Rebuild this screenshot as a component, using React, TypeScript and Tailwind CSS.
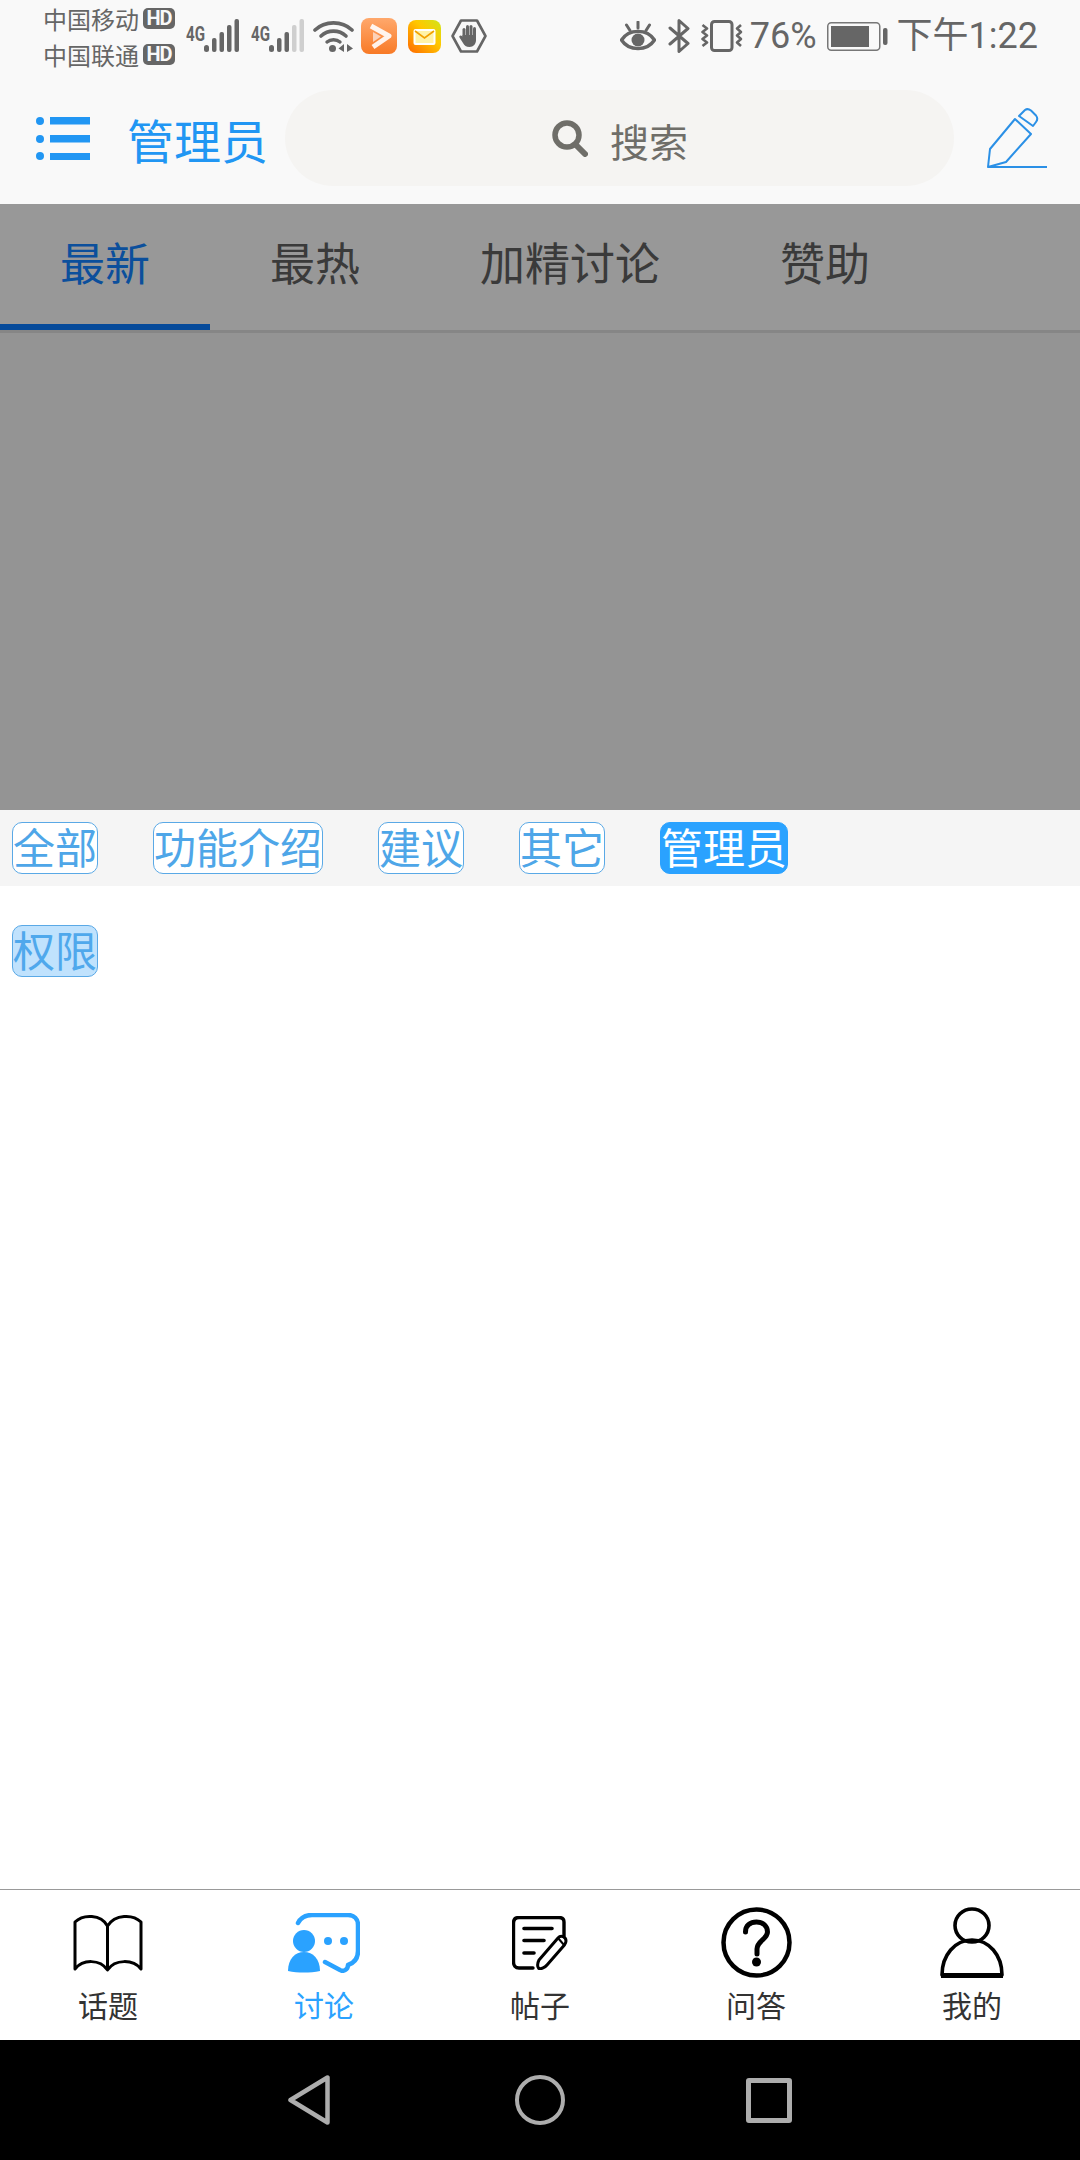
import React from 'react';

const cjk = { fontFamily: '"Noto Sans CJK SC", "Noto Sans", sans-serif' };

function HdBadge() {
  return (
    <span className="ml-[4px] flex h-[21px] w-[32px] items-center justify-center rounded-[5px] bg-[#666666] font-['Roboto',sans-serif] text-[20px] leading-none font-bold tracking-[-1px] text-[#f9f9f9]">
      HD
    </span>
  );
}

function Signal({ level }: { level: number }) {
  const bars = [
    { x: 8, y: 19 },
    { x: 15.500, y: 13 },
    { x: 23, y: 6 },
    { x: 30.500, y: 0 },
  ];
  return (
    <div className="flex h-[34px] items-start">
      <span className="inline-block w-[18px] origin-left scale-x-[0.72] font-['Roboto',sans-serif] text-[21px] leading-[30px] font-bold text-[#666666]">4G</span>
      <svg width="35" height="34" viewBox="0 0 35 34">
        <rect x="0" y="26" width="5" height="7" rx="2.500" fill="#666" />
        {bars.map((b, i) => (
          <rect key={i} x={b.x} y={b.y} width="4.500" height={33 - b.y} rx="2" fill={i < level ? '#666' : '#cfcfcf'} />
        ))}
      </svg>
    </div>
  );
}

function Wifi() {
  return (
    <svg width="41" height="34" viewBox="0 0 41 34" fill="none" stroke="#666">
      <path d="M2 11C12 1.500 29 1.500 39 11" strokeWidth="3.600" strokeLinecap="round" />
      <path d="M8 17C15 10.500 26 10.500 33 17" strokeWidth="3.600" strokeLinecap="round" />
      <path d="M14 23C17.500 20 23.500 20 27 23" strokeWidth="3.400" strokeLinecap="round" />
      <circle cx="19.500" cy="29.500" r="3.500" fill="#666" stroke="none" />
      <path d="M31 25V33L25.500 29.500ZM34 25V33L40 29.500Z" fill="#666" stroke="none" />
    </svg>
  );
}

function VideoApp() {
  return (
    <svg width="36" height="36" viewBox="0 0 36 36">
      <defs>
        <linearGradient id="video" x1="0" y1="0" x2="0" y2="1">
          <stop offset="0" stopColor="#ffa86c" />
          <stop offset="1" stopColor="#f87a26" />
        </linearGradient>
      </defs>
      <rect width="36" height="36" rx="8" fill="url(#video)" />
      <path d="M10 8L28 18L12 29" fill="none" stroke="#fff" strokeWidth="5" strokeLinejoin="round" opacity="0.9" />
      <path d="M12 14L20 18.500L12 24Z" fill="#fcd2b8" />
    </svg>
  );
}

function MailApp() {
  return (
    <svg width="33" height="33" viewBox="0 0 33 33">
      <defs>
        <linearGradient id="mail" x1="1" y1="0" x2="0" y2="1">
          <stop offset="0" stopColor="#cfe61a" />
          <stop offset="0.4" stopColor="#ffc800" />
          <stop offset="1" stopColor="#ff6a00" />
        </linearGradient>
      </defs>
      <rect width="33" height="33" rx="8" fill="url(#mail)" />
      <rect x="6.500" y="10" width="20" height="14" rx="1" fill="#fff3a8" stroke="#fff" strokeWidth="2" />
      <path d="M7 11L16.500 18L26 11" fill="none" stroke="#f2a100" strokeWidth="1.600" />
    </svg>
  );
}

function HandHex() {
  return (
    <svg width="36" height="34" viewBox="0 0 36 34">
      <path d="M1.500 17L10 1.500H26L34.500 17L26 32.500H10Z" fill="none" stroke="#666" strokeWidth="2.600" strokeLinejoin="round" />
      <g fill="#666">
        <rect x="11.500" y="9" width="3" height="13" rx="1.500" />
        <rect x="15" y="6" width="3" height="14" rx="1.500" />
        <rect x="18.500" y="6" width="3" height="14" rx="1.500" />
        <rect x="22" y="8" width="3" height="14" rx="1.500" />
        <path d="M11.500 16H25V21C25 25 22.500 28 18.500 28C15 28 13.500 26.500 12 24L8.500 18.500C7.500 17 9.500 15.500 11 17L11.500 18Z" />
      </g>
    </svg>
  );
}

function Eye() {
  return (
    <svg width="36" height="31" viewBox="0 0 36 31" fill="none" stroke="#666">
      <path d="M1.500 19C9 7.500 27 7.500 34.500 19C27 30.500 9 30.500 1.500 19Z" strokeWidth="3.400" strokeLinejoin="round" />
      <circle cx="18" cy="19" r="6.500" fill="#666" stroke="none" />
      <path d="M18 1V7M6.500 4L10 9.500M29.500 4L26 9.500" strokeWidth="3" strokeLinecap="round" />
    </svg>
  );
}

function Bluetooth() {
  return (
    <svg width="22" height="34" viewBox="0 0 22 34" fill="none" stroke="#666" strokeWidth="3" strokeLinejoin="round" strokeLinecap="round">
      <path d="M2 9L20 24.500L11 32.500V1.500L20 9.500L2 25" />
    </svg>
  );
}

function Vibrate() {
  return (
    <svg width="42" height="32" viewBox="0 0 42 32" fill="none" stroke="#666" strokeWidth="2.600" strokeLinejoin="round">
      <rect x="10.500" y="1.500" width="20.500" height="29" rx="3" strokeWidth="3" />
      <path d="M1.500 5L6 8.500L1.500 12L6 15.500L1.500 19L6 22.500L1.500 26" />
      <path d="M40 5L36 8.500L40 12L36 15.500L40 19L36 22.500L40 26" />
    </svg>
  );
}

function Battery() {
  return (
    <svg width="61" height="29" viewBox="0 0 61 29">
      <rect x="0.750" y="0.750" width="52" height="27.500" rx="3.500" fill="none" stroke="#777" strokeWidth="1.500" />
      <rect x="4" y="4" width="38" height="21" fill="#666" />
      <rect x="56" y="6" width="4.500" height="17" rx="2" fill="#666" />
    </svg>
  );
}

function MenuIcon() {
  return (
    <svg width="54" height="43" viewBox="0 0 54 43" fill="#2196f3">
      <circle cx="4" cy="4" r="4" />
      <circle cx="4" cy="22" r="4" />
      <circle cx="4" cy="39" r="4" />
      <rect x="14" y="0" width="40" height="7.500" />
      <rect x="14" y="18" width="40" height="7.500" />
      <rect x="14" y="36" width="40" height="7" />
    </svg>
  );
}

function SearchIcon() {
  return (
    <svg width="36" height="37" viewBox="0 0 36 37" fill="none" stroke="#6f6e69">
      <circle cx="15" cy="15" r="12" strokeWidth="5.500" />
      <path d="M24 25L33 34" strokeWidth="6" strokeLinecap="round" />
    </svg>
  );
}

function PenIcon() {
  return (
    <svg width="60" height="60" viewBox="0 0 60 60" fill="none" stroke="#2b90e6" strokeWidth="2" strokeLinejoin="round">
      <path d="M1 59H60" />
      <path d="M1 59L3 41L28 11L44 26L19 54Z" />
      <path d="M32 8L38 2C40 0.500 42 1 44 2.500L49 7.500C51 10 50.500 12 49 14L46 18Z" />
    </svg>
  );
}

function BookIcon() {
  return (
    <svg width="70" height="58" viewBox="0 0 70 58" fill="none" stroke="#000" strokeWidth="3" strokeLinejoin="round">
      <path d="M34.500 12C28 0 10 0 2 8V55C10 45 27 45 34.500 56C42 45 60 45 68 55V8C60 0 42 0 34.500 12Z" />
      <path d="M34.500 12V56" />
    </svg>
  );
}

function ChatIcon() {
  return (
    <svg width="72" height="60" viewBox="0 0 72 60" fill="#2aa2ff">
      <path d="M10 10C13 4 17 2 24 2H60C66 2 70 6 70 12V38C70 46 66 50 60 52C60 57 55 59 52 57L37 49" fill="none" stroke="#2aa2ff" strokeWidth="4.500" strokeLinecap="round" strokeLinejoin="round" />
      <circle cx="16" cy="28" r="11" />
      <path d="M0 58C0 46 7 39 16 39C25 39 32 46 32 58C22 60 10 60 0 58Z" />
      <circle cx="40" cy="28" r="4" />
      <circle cx="56" cy="28" r="4" />
    </svg>
  );
}

function NoteIcon() {
  return (
    <svg width="56" height="54" viewBox="0 0 56 54" fill="none" stroke="#000">
      <path d="M52 20V6C52 3 50 1.500 47 1.500H7C3.500 1.500 1.500 3.500 1.500 7V46C1.500 49.500 3.500 52 7 52H21" strokeWidth="3.400" strokeLinecap="round" />
      <path d="M12 12.500H40M12 24.500H32M12 37H22" strokeWidth="3.600" strokeLinecap="round" />
      <path d="M27 44L46 22C49 18.500 54 21 54 25C54 27 53 28 52 29.500L35 49C33 51.500 28 54 26.500 52C25.500 50.500 25.500 47 27 44Z" fill="#fff" strokeWidth="3" strokeLinejoin="round" />
      <path d="M46 22L52 29" strokeWidth="2" />
    </svg>
  );
}

function QuestionIcon() {
  return (
    <svg width="71" height="71" viewBox="0 0 71 71" fill="none" stroke="#000">
      <circle cx="35.500" cy="35.500" r="33" strokeWidth="4.500" />
      <path d="M24.500 25C24.500 18 29.500 15 35.500 15C42 15 46.500 19 46.500 25C46.500 32 36 34 36 42V47" strokeWidth="5" strokeLinecap="round" />
      <circle cx="35.500" cy="55" r="4.500" fill="#000" stroke="none" />
    </svg>
  );
}

function PersonIcon() {
  return (
    <svg width="64" height="71" viewBox="0 0 64 71" fill="none" stroke="#000">
      <ellipse cx="32" cy="18.500" rx="17" ry="16.500" strokeWidth="3.600" />
      <path d="M2 68C2 48 15 33 32 33C49 33 62 48 62 68Z" strokeWidth="3.600" strokeLinejoin="round" />
      <path d="M1 68.500H63" strokeWidth="5" />
    </svg>
  );
}

function Tag({ label, className = 'border-[#5aa9e6] bg-white text-[#4ea6e8]' }: { label: string; className?: string }) {
  return (
    <span className={`h-[52px] rounded-[10px] border text-[42px] leading-[46px] ${className}`}>
      {label}
    </span>
  );
}

const tabs = ['最新', '最热', '加精讨论', '赞助'];

const navItems = [
  { label: '话题', icon: <BookIcon /> },
  { label: '讨论', icon: <ChatIcon />, active: true },
  { label: '帖子', icon: <NoteIcon /> },
  { label: '问答', icon: <QuestionIcon /> },
  { label: '我的', icon: <PersonIcon /> },
];

export default function App() {
  return (
    <div className="flex h-[2160px] w-[1080px] flex-col overflow-hidden bg-white" style={cjk}>
      {/* status bar */}
      <div className="flex h-[72px] items-center justify-between bg-[#f9f9f9] pr-[42px] pl-[43px] text-[#666666]">
        <div className="flex items-center">
          <div className="flex w-[132px] flex-col gap-[15px] text-[24px] leading-[21px]">
            <div className="flex items-center whitespace-nowrap">
              中国移动
              <HdBadge />
            </div>
            <div className="flex items-center whitespace-nowrap">
              中国联通
              <HdBadge />
            </div>
          </div>
          <div className="ml-[11px] flex items-center">
            <Signal level={4} />
          </div>
          <div className="ml-[12px] flex items-center">
            <Signal level={2} />
          </div>
          <div className="ml-[9px] flex items-center">
            <Wifi />
          </div>
          <div className="ml-[7px] flex items-center">
            <VideoApp />
          </div>
          <div className="ml-[11px] flex items-center">
            <MailApp />
          </div>
          <div className="ml-[10px] flex items-center">
            <HandHex />
          </div>
        </div>
        <div className="flex items-center">
          <Eye />
          <div className="ml-[12px] flex">
            <Bluetooth />
          </div>
          <div className="ml-[11px] flex">
            <Vibrate />
          </div>
          <span className="ml-[7px] font-['Roboto',sans-serif] text-[36px] leading-none">76%</span>
          <div className="ml-[10px] flex">
            <Battery />
          </div>
          <span className="ml-[9px] text-[36px] leading-none" style={{ fontFamily: 'Roboto, "Noto Sans CJK SC", sans-serif' }}>
            下午1:22
          </span>
        </div>
      </div>

      {/* header */}
      <div className="flex h-[132px] items-center bg-[#f9f9f9]">
        <div className="ml-[36px] flex">
          <MenuIcon />
        </div>
        <span className="ml-[37px] text-[47px] leading-none text-[#2196f3]">管理员</span>
        <div className="ml-[17px] flex h-[96px] w-[669px] items-center rounded-[48px] bg-[#f5f4f2]">
          <div className="ml-[267px] flex">
            <SearchIcon />
          </div>
          <span className="mt-[4px] ml-[22px] text-[39px] leading-none text-[#6f6e69]">搜索</span>
        </div>
        <div className="ml-[33px] flex">
          <PenIcon />
        </div>
      </div>

      {/* dimmed tabs + panel */}
      <div className="h-[606px] bg-[#949494]">
        <div className="flex h-[129px] border-b-[3px] border-[#868686] bg-[#989898]">
          {tabs.map((tab, i) => (
            <div
              key={tab}
              className={`flex h-[126px] items-center border-b-[6px] px-[60px] pb-[6px] text-[45px] leading-none ${
                i === 0 ? 'border-[#054a9a] text-[#0b4f9c]' : 'border-transparent text-[#3a3a3a]'
              }`}
            >
              {tab}
            </div>
          ))}
        </div>
      </div>

      {/* category tags */}
      <div className="flex h-[76px] items-start gap-[55px] bg-[#f5f5f5] pt-[12px] pl-[12px]">
        <Tag label="全部" />
        <Tag label="功能介绍" />
        <Tag label="建议" />
        <Tag label="其它" />
        <Tag label="管理员" className="border-[#2aa2ff] bg-[#2aa2ff] text-white" />
      </div>

      <div className="flex-1 pt-[39px] pl-[12px]">
        <div className="flex">
          <Tag label="权限" className="border-[#5aa9e6] bg-[#c0e2fd] text-[#4fa8ec]" />
        </div>
      </div>

      {/* bottom nav */}
      <div className="grid h-[151px] grid-cols-5 border-t border-[#999999] bg-white pt-[17px]">
        {navItems.map((item) => (
          <div key={item.label} className="flex flex-col items-center">
            <div className="flex h-[71px] items-center">{item.icon}</div>
            <span className={`mt-[11px] text-[30px] leading-[30px] ${item.active ? 'text-[#2aa2ff]' : 'text-[#333333]'}`}>
              {item.label}
            </span>
          </div>
        ))}
      </div>

      {/* android nav */}
      <div className="flex h-[120px] items-center justify-center bg-black">
        <svg width="42" height="50" viewBox="0 0 42 50" fill="none" stroke="#adadad" strokeWidth="4.500" strokeLinejoin="round">
          <path d="M39.500 2.500V47.500L2.500 25Z" />
        </svg>
        <div className="ml-[185px] h-[50px] w-[50px] rounded-full border-[4.5px] border-[#adadad]" />
        <div className="ml-[181px] h-[45px] w-[46px] rounded-[3px] border-[5px] border-[#adadad]" />
      </div>
    </div>
  );
}
